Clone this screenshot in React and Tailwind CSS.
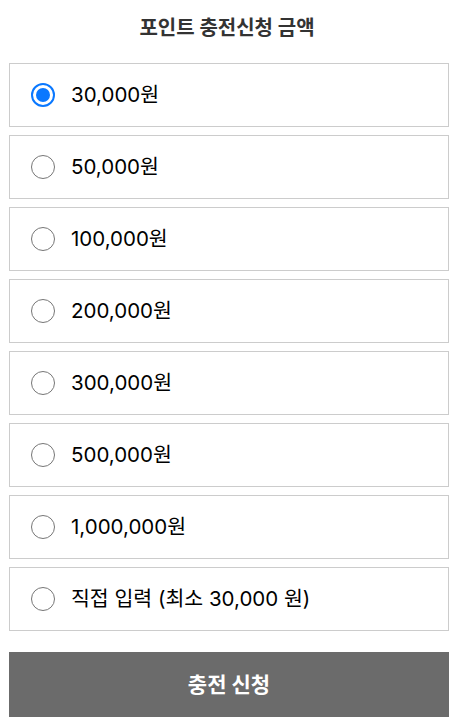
import { useState } from 'react'

const AMOUNTS = [
  '30,000원',
  '50,000원',
  '100,000원',
  '200,000원',
  '300,000원',
  '500,000원',
  '1,000,000원',
  '직접 입력 (최소 30,000 원)',
]

function Radio({ checked }) {
  if (checked) {
    return (
      <span className="flex h-[24px] w-[24px] shrink-0 items-center justify-center rounded-full border-2 border-[#0a78ff] bg-white">
        <span className="h-[14px] w-[14px] rounded-full bg-[#0a78ff]" />
      </span>
    )
  }
  return <span className="h-[24px] w-[24px] shrink-0 rounded-full border border-[#767676] bg-white" />
}

export default function App() {
  const [selected, setSelected] = useState(0)

  return (
    <div
      className="min-h-[723px] bg-[#f7f7f7]"
      style={{ fontFamily: 'Inter, "Noto Sans CJK KR", sans-serif' }}
    >
      <div className="bg-white pb-[6px]">
        <h1 className="pt-[13px] pb-[20px] text-center text-[20px] leading-[30px] font-bold text-[#333]">
          포인트 충전신청 금액
        </h1>
        <ul className="ml-[9px] flex w-[440px] flex-col gap-[8px]">
          {AMOUNTS.map((label, i) => (
            <li key={label}>
              <button
                type="button"
                onClick={() => setSelected(i)}
                className="flex h-[64px] w-full items-center gap-[16px] border border-[#cccccc] bg-white pl-[21px] text-left"
              >
                <Radio checked={selected === i} />
                <span className="text-[20.5px] leading-none text-black">{label}</span>
              </button>
            </li>
          ))}
        </ul>
        <button
          type="button"
          className="mt-[21px] ml-[9px] flex h-[65px] w-[440px] items-center justify-center bg-[#6b6b6b] text-[21px] font-bold text-white"
        >
          충전 신청
        </button>
      </div>
    </div>
  )
}
